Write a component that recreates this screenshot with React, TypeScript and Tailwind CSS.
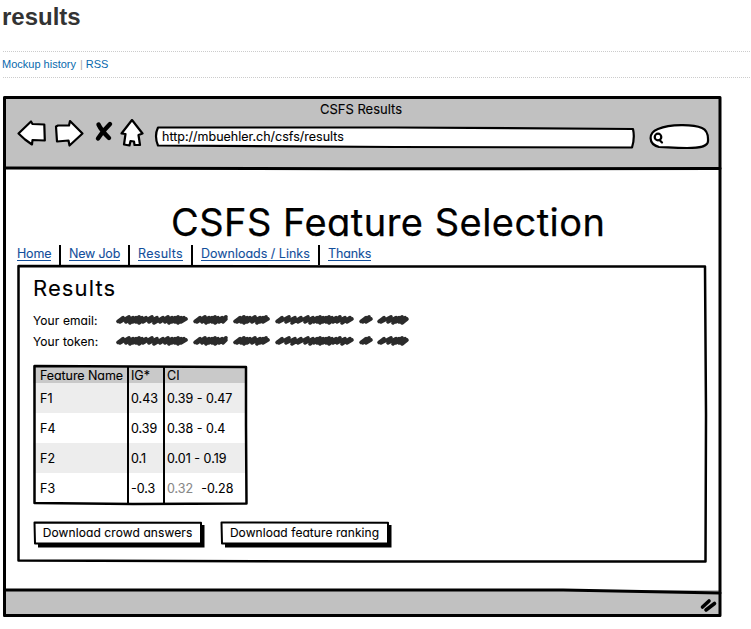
import React from "react";

const sketchFont = "font-['Inter',sans-serif] [font-feature-settings:'cv11'] [-webkit-text-stroke:0.1px] text-black whitespace-nowrap";

function Sketch({ w, h, children }: { w: number; h: number; children: React.ReactNode }) {
  return (
    <svg
      className="absolute left-0 top-0 overflow-visible pointer-events-none"
      width={w}
      height={h}
      fill="none"
      stroke="#000"
      strokeWidth={3}
      strokeLinecap="round"
      strokeLinejoin="round"
    >
      {children}
    </svg>
  );
}

// Each scribbled word: start, end and the spacing of its successive strokes.
const words: [number, number, number[]][] = [
  [117, 187, [6, 4, 3, 3, 3, 4, 6, 5, 6, 5, 4, 3, 3, 3, 3, 3, 3]],
  [194, 227, [5, 4, 3, 3, 3, 4, 4, 3]],
  [234, 269, [4, 3, 3, 5, 5, 3, 3, 3]],
  [276, 353, [7, 6, 6, 7, 5, 4, 3, 3, 3, 3, 3, 4, 4, 5, 5, 4]],
  [360, 372, [3, 3, 3]],
  [378, 408, [7, 5, 3, 3, 3, 3]],
];

function Scribble() {
  const parts = words.map(([a, b, steps]) => {
    let x = a - 113;
    let d = `M${a - 115} 7.5`;
    steps.forEach((s, i) => {
      if (x + 3 > b - 117) return;
      d += ` L${x + 3} ${i % 3 === 1 ? 2.8 : 3.6} L${x} ${i % 3 === 2 ? 9 : 8}`;
      x += s;
    });
    return d + ` L${b - 117} 5`;
  });
  return (
    <svg width="294" height="12" viewBox="0 0 294 12" fill="none" stroke="#2b2b2b" strokeWidth="3.600" strokeLinecap="round" strokeLinejoin="round">
      {parts.map((d) => (
        <path key={d} d={d} />
      ))}
    </svg>
  );
}

const nav = [
  { t: "Home", c: "w-[34px] tracking-[-0.2px]" },
  { t: "New Job", c: "w-[51px] tracking-[-0.2px]" },
  { t: "Results", c: "w-[45px] tracking-[0.3px]" },
  { t: "Downloads / Links", c: "w-[109px]" },
  { t: "Thanks", c: "w-[43px] tracking-[-0.1px]" },
];

const rows = [
  ["F1", "0.43", "0.39 - 0.47"],
  ["F4", "0.39", "0.38 - 0.4"],
  ["F2", "0.1", "0.01 - 0.19"],
  ["F3", "-0.3", ""],
];

function SketchButton({ label, className }: { label: string; className: string }) {
  return (
    <button className={`relative h-[26px] w-[169px] pb-[2px] text-[12px] leading-[22px] ${className}`}>
      <Sketch w={171} h={26}>
        <path d="M5 24.500H169.500V4" strokeWidth="4" strokeLinecap="butt" strokeLinejoin="miter" />
        <path d="M1.500 1.500L168 1.800V22.500L2 22.500Z" strokeWidth="2" fill="#fff" />
      </Sketch>
      <span className="relative">{label}</span>
    </button>
  );
}

export default function App() {
  return (
    <div className="h-[629px] w-[751px] overflow-hidden bg-white">
      <h1 className="h-[51px] pl-[2px] pt-[3px] font-['Liberation_Sans',Arial,sans-serif] text-[24px] font-bold leading-[28px] text-[#333]">results</h1>
      <div className="ml-[3px] mr-px flex h-[27px] items-center border-y border-dotted border-[#ccc] font-['Liberation_Sans',Arial,sans-serif] text-[11px] text-[#0769ad]">
        <a className="-ml-px">Mockup history</a>
        <span className="pl-[4px] pr-[3px] text-[#aaa]">|</span>
        <a>RSS</a>
      </div>

      <main className={`relative ml-[3px] mt-[18px] h-[521px] w-[718px] ${sketchFont}`}>
        <header className="relative h-[73px] bg-[#c1c1c1]">
          <div className="h-[23px] pr-[2px] pt-[4px] text-center text-[13px] leading-[18px]">CSFS Results</div>
          <div className="flex">
            <svg className="h-[34px] w-[152px] shrink-0" viewBox="18 119 152 34" fill="#fff" stroke="#000" strokeWidth="2.200" strokeLinejoin="round">
              <g transform="translate(15 0)">
                <path d="M18.500 133.500L31 121.500L32.500 124L44.300 124.500L44.800 140.500L32.500 140L32 144.500L25 139.500Z" />
                <path d="M56 126.500L58 125.500L69 125.500L70 121L82.500 133.500L69.500 145.500L68.500 140.500L57 141.500Z" />
                <path d="M98.500 124.500Q101 130 109 138M110 124L103 131.500L98 138.500" strokeWidth="4.400" strokeLinecap="round" fill="none" />
                <path d="M132 120L142.500 133.500L138.500 135L140 145L134.500 145L134 141.500L130.500 141L129.500 145.500L124 144.500L125.500 134L121.500 133.500Z" />
              </g>
            </svg>
            <div className="relative mt-[7px] h-[22px] w-[479px] pl-[7px] text-[12.5px] leading-[21px]">
              <Sketch w={479} h={22}>
                <path d="M3 1.500L240 1.500L478 3Q480 12 477 21.500L240 21L3 19.500Q-1 10 3 1.500Z" fill="#fff" strokeWidth="2.200" />
              </Sketch>
              <span className="relative">http://mbuehler.ch/csfs/results</span>
            </div>
            <svg className="ml-[15px] mt-[5px] h-[28px] w-[62px]" viewBox="0 0 62 28" fill="#fff" stroke="#000" strokeWidth="2.200" strokeLinecap="round">
              <path d="M9 5C21 0 44 0 53 4C60 7 59 14 59 17C59 22 53 24 38 24C24 24 17 23 10 23C-1 20 -1 9 9 5Z" />
              <circle cx="9" cy="13" r="3.300" />
              <path d="M10.500 16L13 18.500" />
            </svg>
          </div>
        </header>

        <div className="h-[421px] pl-[14px]">
          <h2 className="ml-[154px] h-[76px] pt-[29px] text-[38px] leading-[48px] tracking-[0.48px] [-webkit-text-stroke:0.25px]">CSFS Feature Selection</h2>
          <nav className="flex h-[20px] text-[12.5px] leading-[17px] text-[#134f9b]">
            {nav.map((n, i) => (
              <React.Fragment key={n.t}>
                <a className={`h-[16px] border-b border-[#134f9b] ${n.c}`}>{n.t}</a>
                {i < 4 && (
                  <span className="flex h-[20px] w-[18px] justify-center">
                    <i className="h-[20px] w-[2px] bg-black" />
                  </span>
                )}
              </React.Fragment>
            ))}
          </nav>
          <section className="relative h-[297px] w-[689px] pl-[16px] pt-[9px]">
            <Sketch w={689} h={297}>
              <path d="M1.500 1L340 1.500L688 1.500L689 150L688.500 296.500L340 296.500L1.500 295.500V160Z" strokeWidth="2.500" />
            </Sketch>
            <h3 className="h-[36px] text-[22px] leading-[28px] tracking-[1.1px]">Results</h3>
            <div className="flex h-[21px] text-[12px] leading-[21px]">
              <span className="w-[83px] tracking-[0.1px]">Your email:</span>
              <span className="pt-[4px]"><Scribble /></span>
            </div>
            <div className="flex h-[21px] text-[12px] leading-[21px]">
              <span className="w-[83px] tracking-[0.1px]">Your token:</span>
              <span className="pt-[4px]"><Scribble /></span>
            </div>
            <div className="relative mt-[13px] h-[139px] w-[214px] pt-px text-[12.5px]">
              <div className="grid h-[17px] grid-cols-[95px_36px_82px] bg-[#c9c9c9] leading-[19px]">
                <span className="pl-[7px] tracking-[-0.08px]">Feature Name</span>
                <span className="pl-[3px]">IG*</span>
                <span className="pl-[3px]">CI</span>
              </div>
              {rows.map((r) => (
                <div key={r[0]} className="grid h-[30px] grid-cols-[95px_36px_82px] leading-[32px] odd:bg-white even:bg-[#ededed]">
                  <span className="pl-[7px]">{r[0]}</span>
                  <span className="pl-[3px]">{r[1]}</span>
                  <span className="pl-[3px]">{r[2] || <><span className="mr-[8px] text-[#888]">0.32</span>-0.28</>}</span>
                </div>
              ))}
              <Sketch w={214} h={139}>
                <path d="M1.500 1L100 1.500L213 2L213 60L213.500 138.500L100 139L1.500 138Z" strokeWidth="2.500" />
                <path d="M95 2V138M131 2V138" strokeWidth="2" />
              </Sketch>
            </div>
            <div className="mt-[17px] flex">
              <SketchButton label="Download crowd answers" className="tracking-[0.1px]" />
              <SketchButton label="Download feature ranking" className="ml-[18px] tracking-[0.07px]" />
            </div>
          </section>
        </div>
        <footer className="h-[27px] bg-[#c1c1c1]" />
        <Sketch w={718} h={521}>
          <path d="M1.500 1.500H717L717 519.500L1.500 519.500V260Z" />
          <path d="M1.500 72L350 72.800L717 72.500" />
          <path d="M1.500 494L560 494L717 497" />
          <path d="M699.500 511L706 505M703 514L711.500 507.500" strokeWidth="3.600" />
        </Sketch>
      </main>
    </div>
  );
}
